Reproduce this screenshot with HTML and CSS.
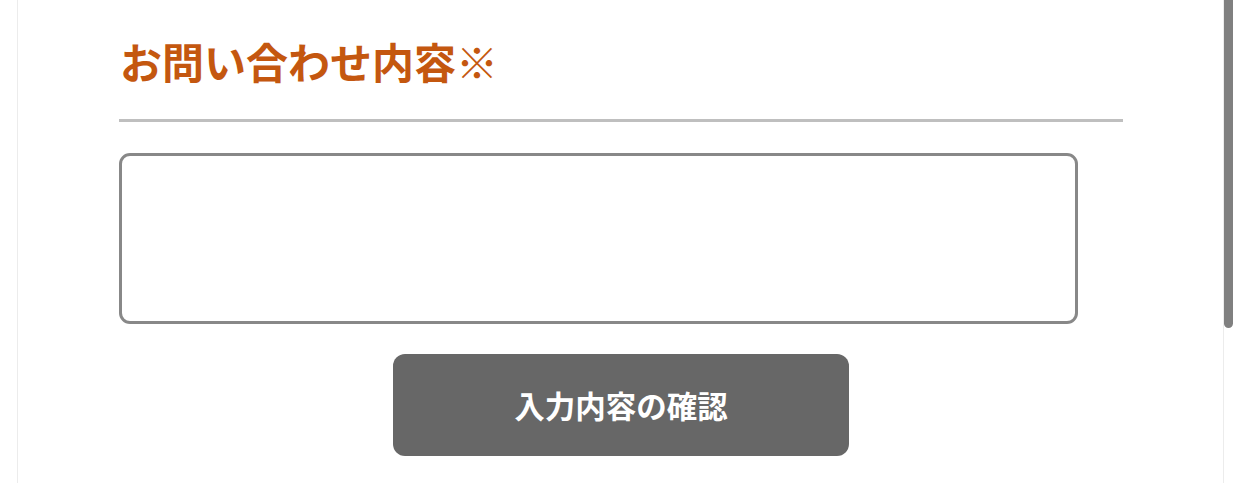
FILE: index.html
```html
<!DOCTYPE html>
<html lang="ja">
<head>
<meta charset="utf-8">
<title>お問い合わせ</title>
<link rel="stylesheet" href="styles.css">
</head>
<body>
<div class="page">
  <section class="card">
    <div class="field">
      <h2 class="field-title">お問い合わせ内容※</h2>
      <textarea class="field-input" aria-label="お問い合わせ内容"></textarea>
    </div>
    <div class="actions">
      <button type="button" class="confirm-btn">入力内容の確認</button>
    </div>
  </section>
  <div class="scroll-thumb"></div>
</div>
</body>
</html>
```
FILE: styles.css
```css
html, body {
  margin: 0;
  padding: 0;
  background: #ffffff;
  height: 100%;
  overflow: hidden;
}
body {
  font-family: "Noto Sans CJK JP", "Noto Sans", sans-serif;
}
.page {
  position: relative;
  height: 483px;
  padding-left: 17px;
}
.card {
  box-sizing: border-box;
  width: 1207px;
  height: 483px;
  border-left: 1px solid #ececec;
  border-right: 1px solid #ececec;
  padding: 30px 100px 0 101px;
}
.field-title {
  margin: 0;
  padding-left: 1px;
  font-size: 42px;
  line-height: 61px;
  font-weight: 700;
  color: #c4570f;
  border-bottom: 3px solid #bfbfbf;
  padding-bottom: 28px;
}
.field-input {
  display: block;
  box-sizing: border-box;
  width: 959px;
  height: 171px;
  margin: 31px 0 0 0;
  border: 3px solid #888888;
  border-radius: 11px;
  background: #fff;
  resize: none;
  outline: none;
}
.actions {
  display: flex;
  justify-content: center;
  margin-top: 30px;
}
.confirm-btn {
  width: 456px;
  height: 102px;
  border: none;
  border-radius: 12px;
  background: #676767;
  color: #ffffff;
  font-family: "Noto Sans CJK JP", "Noto Sans", sans-serif;
  font-size: 30.5px;
  font-weight: 700;
  padding: 0;
}
.scroll-thumb {
  position: absolute;
  left: 1224px;
  top: 0;
  width: 9px;
  height: 328px;
  background: #808080;
  border-radius: 0 0 5px 5px;
}
```
